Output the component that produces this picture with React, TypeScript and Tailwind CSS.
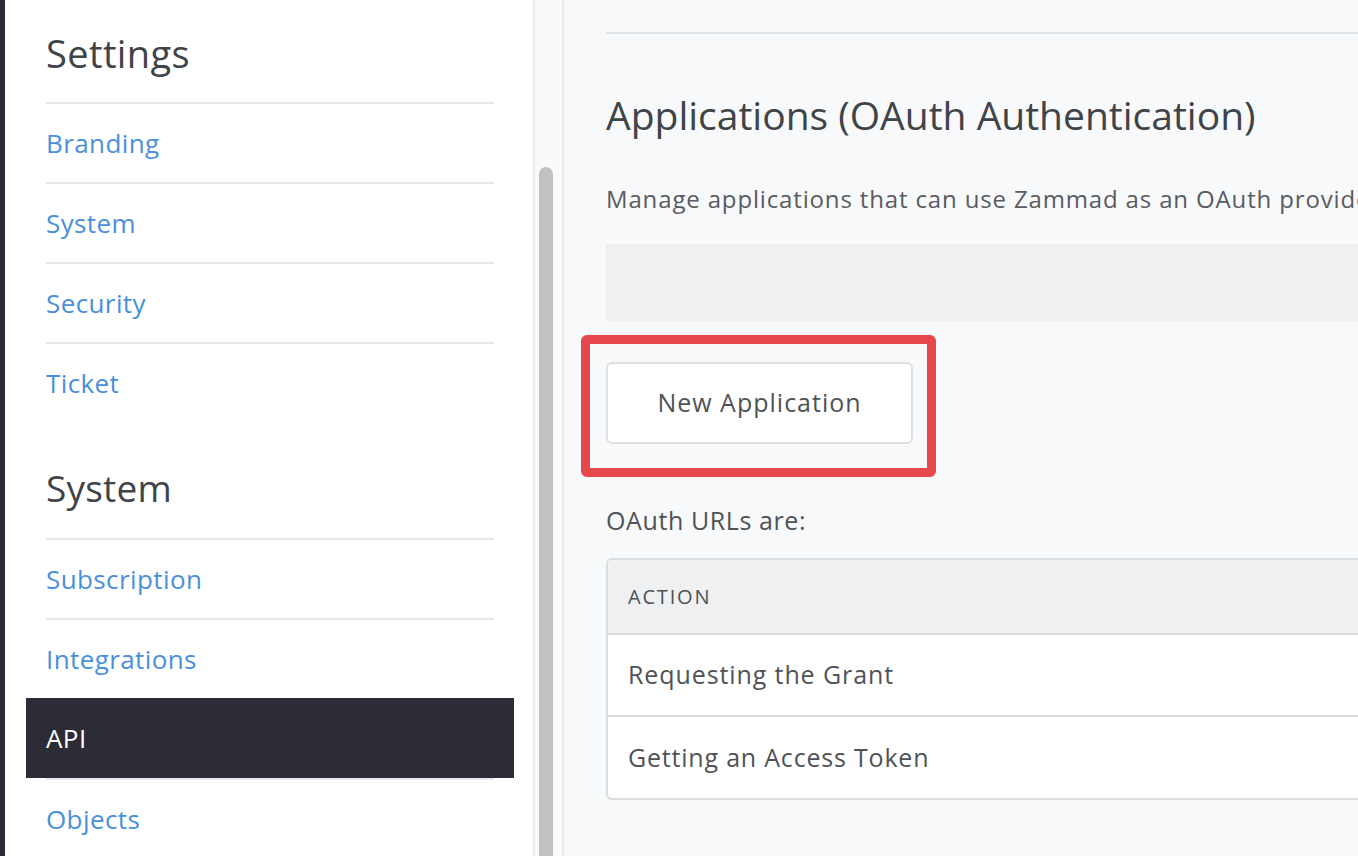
const settingsItems = ["Branding", "System", "Security", "Ticket"];
const systemItems = ["Subscription", "Integrations", "API", "Objects"];

const NavItem = ({ label, active }: { label: string; active?: boolean }) =>
  active ? (
    <div className="-mx-5 flex h-[80px] items-center bg-[#2b2c35] px-5 text-[26px] tracking-[0.4px] text-white">
      {label}
    </div>
  ) : (
    <div className="flex h-[80px] items-center border-t-2 border-[#e6e6e6] text-[26px] tracking-[0.4px] text-[#4a90d9]">
      {label}
    </div>
  );

const App = () => {
  return (
    <div
      className="flex h-[856px] w-[1358px] overflow-hidden bg-[#f8f9fa]"
      style={{ fontFamily: "'Open Sans', Lato, sans-serif" }}
    >
      <div className="w-[5px] shrink-0 bg-[#2b2c33]" />
      <div className="w-[528px] shrink-0 bg-white pl-[41px] pr-[39px]">
        <h2 className="flex h-[102px] items-center pt-1 text-[38px] tracking-[0.4px] text-[#3f4448]">Settings</h2>
        {settingsItems.map((item) => (
          <NavItem key={item} label={item} />
        ))}
        <h2 className="flex h-[116px] items-center pt-4 text-[37px] tracking-[0.2px] text-[#3f4448]">
          System
        </h2>
        {systemItems.map((item) => (
          <NavItem key={item} label={item} active={item === "API"} />
        ))}
      </div>
      <div className="flex w-[31px] shrink-0 border-x-2 border-[#ebebeb] bg-[#fafafa] pt-[167px] pl-[4px]">
        <div className="h-full w-[14px] rounded-t-full bg-[#c1c1c1]" />
      </div>
      <div className="min-w-0 flex-1 pl-[42px]">
        <div className="mt-[32px] border-t-2 border-[#e1e4e6]" />
        <h1 className="mt-[52px] whitespace-nowrap text-[39px] text-[#3f4448]">
          Applications (OAuth Authentication)
        </h1>
        <p className="mt-[36px] whitespace-nowrap text-[24px] tracking-[0.85px] text-[#585c60]">
          Manage applications that can use Zammad as an OAuth provider.
        </p>
        <div className="mt-[27px] h-[77px] bg-[#eff0f2]" />
        <div className="-ml-[25px] mt-[14px] inline-block rounded-[6px] border-[9px] border-[#e5484d] pb-[24px] pl-[16px] pr-[14px] pt-[18px]">
          <button className="h-[82px] w-[307px] rounded-[6px] border-2 border-[#dee1e4] bg-white text-[25px] tracking-[1px] text-[#4f5356]">
            New Application
          </button>
        </div>
        <p className="mt-[25px] text-[25px] tracking-[0.6px] text-[#4f5356]">OAuth URLs are:</p>
        <div className="mt-[19px] overflow-hidden rounded-l-[6px] border-y-2 border-l-2 border-[#d9dee0] bg-white">
          <div className="flex h-[75px] items-center border-b-2 border-[#d9dee0] bg-[#eef0f1] px-[20px] text-[20px] uppercase tracking-[1.8px] text-[#4f5356]">
            Action
          </div>
          <div className="flex h-[82px] items-center border-b-2 border-[#d9dee0] px-[20px] text-[25px] tracking-[0.9px] text-[#4f5356]">
            Requesting the Grant
          </div>
          <div className="flex h-[81px] items-center px-[20px] text-[25px] tracking-[0.8px] text-[#4f5356]">
            Getting an Access Token
          </div>
        </div>
      </div>
    </div>
  );
};

export default App;
